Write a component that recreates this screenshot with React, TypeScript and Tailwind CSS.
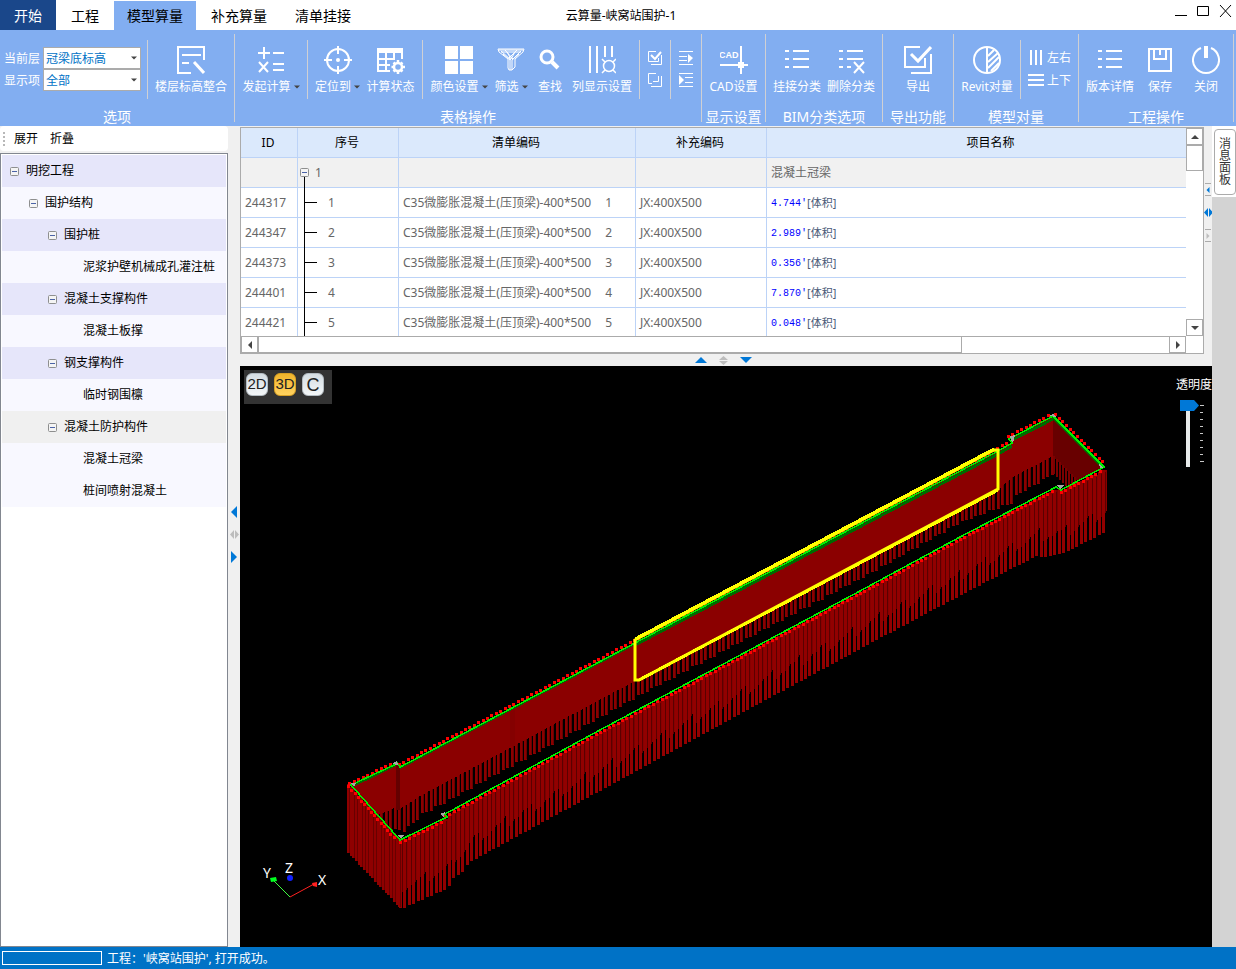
import { useState } from 'react';
import type { ReactNode } from 'react';

type Point = [number, number];

interface TreeNode {
  label: string;
  level: number;
  tone: string;
  leaf?: boolean;
}

const TABS = ['工程', '模型算量', '补充算量', '清单挂接'];

const TREE: TreeNode[] = [
  { label: '明挖工程', level: 0, tone: 'bg-[#e6e6fa]' },
  { label: '围护结构', level: 1, tone: 'bg-[#f8f8ff]' },
  { label: '围护桩', level: 2, tone: 'bg-[#e6e6fa]' },
  { label: '泥浆护壁机械成孔灌注桩', level: 3, tone: 'bg-[#f8f8ff]', leaf: true },
  { label: '混凝土支撑构件', level: 2, tone: 'bg-[#e6e6fa]' },
  { label: '混凝土板撑', level: 3, tone: 'bg-[#f8f8ff]', leaf: true },
  { label: '钢支撑构件', level: 2, tone: 'bg-[#e6e6fa]' },
  { label: '临时钢围檩', level: 3, tone: 'bg-[#f8f8ff]', leaf: true },
  { label: '混凝土防护构件', level: 2, tone: 'bg-[#f0f0f0]' },
  { label: '混凝土冠梁', level: 3, tone: 'bg-[#f8f8ff]', leaf: true },
  { label: '桩间喷射混凝土', level: 3, tone: 'bg-[#f8f8ff]', leaf: true },
];

const INDENT = ['pl-2', 'pl-[27px]', 'pl-[46px]', 'pl-[81px]'];

const ROWS = [
  { id: '244317', no: 1, volume: "4.744'" },
  { id: '244347', no: 2, volume: "2.989'" },
  { id: '244373', no: 3, volume: "0.356'" },
  { id: '244401', no: 4, volume: "7.870'" },
  { id: '244421', no: 5, volume: "0.048'" },
];

/* ---------- icons ---------- */

function Icon({ children, size = 28 }: { children: ReactNode; size?: number }) {
  return (
    <svg
      width={size}
      height={size}
      viewBox={`0 0 ${size} ${size}`}
      fill="none"
      stroke="#fff"
      strokeWidth="2"
      aria-hidden="true"
    >
      {children}
    </svg>
  );
}

const FloorIcon = () => (
  <Icon>
    <path d="M27 14V1H1v26h13M5 9h19M5 17h7" />
    <path d="M17 16l10 11" strokeWidth="3" />
  </Icon>
);

const CalcIcon = () => (
  <Icon>
    <path d="M1 7h12M7 1v12M16 7h11M16 18h11M16 24h11M2 16l9 10M11 16L2 26" />
  </Icon>
);

const TargetIcon = () => (
  <Icon>
    <circle cx="14" cy="14" r="11" />
    <path d="M14 0v8M14 20v8M0 14h8M20 14h8" />
    <circle cx="14" cy="14" r="2" fill="#fff" stroke="none" />
  </Icon>
);

const TableGearIcon = () => (
  <Icon>
    <path d="M0 2h26v5H0z" fill="#fff" stroke="none" />
    <path d="M1 7v18h12M25 7v6M1 13h17M1 19h12M9 7v18M17 7v7" />
    <circle cx="21" cy="21" r="4" strokeWidth="2.500" />
    <path
      d="M21 14v3M21 25v3M14.500 21h2M25.500 21h2.500M16.500 16.500l2 2M23.500 23.500l2 2M25.500 16.500l-2 2M18.500 23.500l-2 2"
      strokeWidth="2.500"
    />
  </Icon>
);

const ColorIcon = () => (
  <Icon>
    <path d="M0 0h13v13H0zM15 0h13v13H15zM0 15h13v13H0zM15 15h13v13H15z" fill="#fff" stroke="none" />
  </Icon>
);

const FilterIcon = () => (
  <Icon>
    <path d="M1 3h26l-1 3-8 7v8l-3 3h-3l-1-2v-9L2 6z" strokeWidth="1" />
    <path d="M2 4h24M4 6h20M4 5l10 9M8 4l8 9M24 5l-9 9M20 4l-8 8M6 8l7 6v10M22 8l-7 6v10M10 6l4 7 4-7" strokeWidth="1" />
  </Icon>
);

const SearchIcon = () => (
  <Icon>
    <circle cx="11" cy="11" r="6" strokeWidth="3" />
    <path d="M16 16l6 6" strokeWidth="4" />
  </Icon>
);

const ColumnsIcon = () => (
  <Icon>
    <path d="M2 0v27M9 0v27M17 0v11M24 0v11" />
    <circle cx="21" cy="20" r="5.500" strokeWidth="1.500" />
    <path d="M14 13l3 3M28 13l-3 3M14 27l3-3M28 27l-3-3" strokeWidth="1.500" />
  </Icon>
);

const CadIcon = () => (
  <Icon>
    <text x="-1" y="12" fontSize="9" fontWeight="700" fontFamily="Liberation Sans, sans-serif" fill="#fff" stroke="none">
      CAD
    </text>
    <path d="M0 19h28M21 0v28" />
    <path d="M18 16h6v6h-6z" fill="#fff" stroke="none" />
  </Icon>
);

const ListIcon = () => (
  <Icon>
    <path d="M2 5h4M10 5h16M2 13h4M10 13h16M2 21h4M10 21h16" />
  </Icon>
);

const ListRemoveIcon = () => (
  <Icon>
    <path d="M2 5h4M10 5h16M2 13h4M10 13h16M2 21h4M10 21h4M17 16l10 11M27 16L17 27" />
  </Icon>
);

const ExportIcon = () => (
  <Icon>
    <path d="M16 1H1v20h20v-9M27 8v19H7" />
    <path d="M7 8l7 7L27 1" strokeWidth="3" />
  </Icon>
);

const RevitIcon = () => (
  <Icon>
    <circle cx="14" cy="14" r="13" />
    <path d="M14 1v26M15 10l6-6M15 16l10-9M15 22l11-11M18 25l8-8" />
  </Icon>
);

const SaveIcon = () => (
  <Icon>
    <path d="M3 3h22v22H3zM8 3v10h12V3M14 4v5" />
  </Icon>
);

const PowerIcon = () => (
  <Icon>
    <path d="M9 2a13 13 0 1 0 10 0" />
    <path d="M14 0v12" strokeWidth="4" />
  </Icon>
);

const CheckAllIcon = () => (
  <Icon size={16}>
    <path d="M9 1.500H1.500v10h10V8M14.500 5v9.500H4" strokeWidth="1" />
    <path d="M4 5l4 4 6-7" />
  </Icon>
);

const InvertIcon = () => (
  <Icon size={16}>
    <path d="M9 1.500H1.500v10H5M11.500 4v5.500H6M14.500 4v10.500H4" strokeWidth="1" />
  </Icon>
);

const IndentIcon = () => (
  <Icon size={16}>
    <path d="M1 1.500h14M1 6.500h8M1 10.500h8M1 14.500h14" strokeWidth="1" />
    <path d="M10 4l5 4-5 5z" fill="#fff" stroke="none" />
  </Icon>
);

const OutdentIcon = () => (
  <Icon size={16}>
    <path d="M1 1.500h14M7 5.500h8M7 10.500h8M1 14.500h14" strokeWidth="1" />
    <path d="M1 3l5 5-5 5z" fill="#fff" stroke="none" />
  </Icon>
);

function Arrow({ dir, color = '#444', size = 6 }: { dir: 'up' | 'down' | 'left' | 'right'; color?: string; size?: number }) {
  const d = {
    up: 'M0 9L6 3l6 6z',
    down: 'M0 3h12L6 9z',
    left: 'M9 0v12L3 6z',
    right: 'M3 0l6 6-6 6z',
  }[dir];
  return (
    <svg width={size} height={size} viewBox="0 0 12 12" className="shrink-0" aria-hidden="true">
      <path d={d} fill={color} />
    </svg>
  );
}

function SplitGrip({ color, upright }: { color: string; upright?: boolean }) {
  return (
    <svg width="9" height="9" viewBox="0 0 9 9" className="shrink-0" aria-hidden="true">
      <path d={upright ? 'M4.500 0L9 4H0zM0 5h9L4.500 9z' : 'M0 4.500L4 0v9zM5 0v9l4-4.500z'} fill={color} />
    </svg>
  );
}

function ExpandBox() {
  return (
    <svg width="9" height="9" viewBox="0 0 9 9" className="shrink-0" aria-hidden="true">
      <rect x="0.500" y="0.500" width="8" height="8" rx="1" fill="#f4f4f4" stroke="#8e8f8f" />
      <path d="M2 4.500h5" stroke="#4b63a7" />
    </svg>
  );
}

/* ---------- ribbon ---------- */

interface RibbonButtonProps {
  icon: ReactNode;
  label: string;
  width: string;
  menu?: boolean;
}

function RibbonButton({ icon, label, width, menu }: RibbonButtonProps) {
  return (
    <button type="button" className={`flex shrink-0 flex-col items-center gap-[5px] pt-4 ${width}`}>
      {icon}
      <span className="flex items-center gap-[3px] text-xs leading-4 whitespace-nowrap">
        {label}
        {menu && <Arrow dir="down" />}
      </span>
    </button>
  );
}

function RibbonGroup({ title, width, children }: { title: string; width: string; children: ReactNode }) {
  return (
    <>
      <section className={`flex shrink-0 flex-col ${width}`}>
        <div className="flex h-[78px] items-start">{children}</div>
        <h2 className="text-center text-sm leading-[18px] whitespace-nowrap">{title}</h2>
      </section>
      <span className="mt-1 h-[88px] w-px shrink-0 bg-[#cfd0d4]" />
    </>
  );
}

const InnerDivider = () => <span className="mt-2.5 h-[59px] w-px shrink-0 bg-[#cfd0d4]" />;

function RibbonSelect({ id, label, options }: { id: string; label: string; options: string[] }) {
  return (
    <div className="flex h-[22px] items-center gap-[3px]">
      <label htmlFor={id} className="pt-0.5 text-xs">
        {label}
      </label>
      <div className="relative">
        <select
          id={id}
          className="block h-[22px] w-[98px] appearance-none border border-[#ababab] bg-white pt-0.5 pl-0.5 text-xs text-[#0072c6]"
        >
          {options.map((option) => (
            <option key={option}>{option}</option>
          ))}
        </select>
        <span className="pointer-events-none absolute top-2 right-1">
          <Arrow dir="down" />
        </span>
      </div>
    </div>
  );
}

function Ribbon() {
  return (
    <div className="flex h-24 shrink-0 overflow-hidden bg-[#82aef1] text-white">
      <RibbonGroup title="选项" width="w-[234px]">
        <div className="w-[147px] pt-[17px] pl-1">
          <RibbonSelect id="floor" label="当前层" options={['冠梁底标高']} />
          <RibbonSelect id="display" label="显示项" options={['全部']} />
        </div>
        <InnerDivider />
        <RibbonButton icon={<FloorIcon />} label="楼层标高整合" width="w-[86px]" />
      </RibbonGroup>

      <RibbonGroup title="表格操作" width="w-[466px]">
        <RibbonButton icon={<CalcIcon />} label="发起计算" width="w-[72px]" menu />
        <InnerDivider />
        <RibbonButton icon={<TargetIcon />} label="定位到" width="w-[59px]" menu />
        <RibbonButton icon={<TableGearIcon />} label="计算状态" width="w-[55px] pr-2" />
        <InnerDivider />
        <RibbonButton icon={<ColorIcon />} label="颜色设置" width="w-[72px]" menu />
        <RibbonButton icon={<FilterIcon />} label="筛选" width="w-8" menu />
        <RibbonButton icon={<SearchIcon />} label="查找" width="w-[46px]" />
        <RibbonButton icon={<ColumnsIcon />} label="列显示设置" width="w-[66px] pr-2" />
        <InnerDivider />
        <div className="flex w-[30px] flex-col items-center gap-1.5 pt-5">
          <button type="button" aria-label="全选"><CheckAllIcon /></button>
          <button type="button" aria-label="反选"><InvertIcon /></button>
        </div>
        <InnerDivider />
        <div className="flex w-[30px] flex-col items-center gap-1.5 pt-5">
          <button type="button" aria-label="展开行"><IndentIcon /></button>
          <button type="button" aria-label="收起行"><OutdentIcon /></button>
        </div>
      </RibbonGroup>

      <RibbonGroup title="显示设置" width="w-[63px]">
        <RibbonButton icon={<CadIcon />} label="CAD设置" width="w-[63px]" />
      </RibbonGroup>

      <RibbonGroup title="BIM分类选项" width="w-[116px]">
        <RibbonButton icon={<ListIcon />} label="挂接分类" width="ml-1 w-[54px]" />
        <RibbonButton icon={<ListRemoveIcon />} label="删除分类" width="w-[54px]" />
      </RibbonGroup>

      <RibbonGroup title="导出功能" width="w-[70px]">
        <RibbonButton icon={<ExportIcon />} label="导出" width="w-[70px]" />
      </RibbonGroup>

      <RibbonGroup title="模型对量" width="w-[124px]">
        <RibbonButton icon={<RevitIcon />} label="Revit对量" width="w-[66px]" />
        <InnerDivider />
        <div className="flex flex-col gap-[7px] pt-5 pl-[7px] text-xs leading-4">
          <button type="button" className="flex items-center gap-[3px]">
            <Icon size={16}>
              <path d="M3 0v15M8 0v15M13 0v15" />
            </Icon>
            左右
          </button>
          <button type="button" className="flex items-center gap-[3px]">
            <Icon size={16}>
              <path d="M0 2h16M0 7h16M0 12h16" />
            </Icon>
            上下
          </button>
        </div>
      </RibbonGroup>

      <RibbonGroup title="工程操作" width="w-[154px]">
        <RibbonButton icon={<ListIcon />} label="版本详情" width="w-[62px]" />
        <RibbonButton icon={<SaveIcon />} label="保存" width="w-[38px]" />
        <RibbonButton icon={<PowerIcon />} label="关闭" width="w-[54px]" />
      </RibbonGroup>
    </div>
  );
}

function TitleBar() {
  const [active, setActive] = useState('模型算量');

  return (
    <header className="grid h-[30px] shrink-0 grid-cols-[1fr_auto_1fr] bg-white">
      <nav className="flex text-sm">
        <button type="button" className="mr-px w-14 bg-[#1a478a] text-white">
          开始
        </button>
        {TABS.map((tab) => (
          <button
            key={tab}
            type="button"
            onClick={() => setActive(tab)}
            className={`mt-px whitespace-nowrap ${tab === active ? 'mx-px bg-[#82aef1] px-[13px]' : 'px-3.5'}`}
          >
            {tab}
          </button>
        ))}
      </nav>
      <h1 className="pl-1.5 text-xs leading-[31px] whitespace-nowrap">云算量-峡窝站围护-1</h1>
      <div className="flex items-start justify-end gap-[9px] pt-1 pr-1">
        <button type="button" aria-label="最小化">
          <svg width="13" height="14" viewBox="0 0 13 14">
            <path d="M0 11.500h12" stroke="#000" />
          </svg>
        </button>
        <button type="button" aria-label="最大化">
          <svg width="13" height="14" viewBox="0 0 13 14">
            <path d="M0.500 2.500h11v9h-11z" fill="none" stroke="#000" />
          </svg>
        </button>
        <button type="button" aria-label="关闭窗口">
          <svg width="13" height="14" viewBox="0 0 13 14">
            <path d="M1 1l11 12M12 1L1 13" stroke="#000" />
          </svg>
        </button>
      </div>
    </header>
  );
}

/* ---------- left tree ---------- */

function TreePanel() {
  return (
    <aside className="flex w-[228px] shrink-0 flex-col text-xs">
      <div className="mb-0.5 flex h-[25px] shrink-0 items-center gap-3 rounded-sm bg-white">
        <span className="ml-[3px] h-3.5 border-l-2 border-dotted border-[#b8b8b8]" />
        <button type="button" className="-ml-[3px]">展开</button>
        <button type="button">折叠</button>
      </div>
      <ul className="flex-1 border border-[#828790] bg-white p-px">
        {TREE.map((node) => (
          <li key={node.label} className={`flex h-8 items-center gap-[7px] ${node.tone} ${INDENT[node.level]}`}>
            {!node.leaf && (
              <button type="button" aria-label="折叠节点">
                <ExpandBox />
              </button>
            )}
            <span className="whitespace-nowrap">{node.label}</span>
          </li>
        ))}
      </ul>
    </aside>
  );
}

/* ---------- quantity table ---------- */

const CELL = 'h-[30px] border-b border-[#bcd3f7] p-0';

function QuantityTable() {
  return (
    <table className="w-[973px] table-fixed border-separate border-spacing-0 text-xs text-[#666]">
      <colgroup>
        <col className="w-[57px]" />
        <col className="w-[101px]" />
        <col className="w-[237px]" />
        <col className="w-[131px]" />
        <col />
      </colgroup>
      <thead>
        <tr className="bg-[#dbe9fc] text-black">
          {['ID', '序号', '清单编码', '补充编码'].map((name) => (
            <th key={name} className={`${CELL} border-r pr-0.5 font-normal`}>
              {name}
            </th>
          ))}
          <th className={`${CELL} font-normal`}>项目名称</th>
        </tr>
      </thead>
      <tbody>
        <tr className="bg-[#f1f1f1]">
          <td className={`${CELL} border-r`} />
          <td className={`${CELL} border-r`}>
            <div className="flex h-[29px] items-center gap-1.5 pl-0.5">
              <svg width="9" height="29" viewBox="0 0 9 29">
                <rect x="0.500" y="10.500" width="8" height="8" rx="1" fill="#f4f4f4" stroke="#8e8f8f" />
                <path d="M2 14.500h5" stroke="#4b63a7" />
                <path d="M4.500 19v10" stroke="#000" />
              </svg>
              1
            </div>
          </td>
          <td className={`${CELL} border-r`} />
          <td className={`${CELL} border-r`} />
          <td className={`${CELL} pl-1`}>混凝土冠梁</td>
        </tr>
        {ROWS.map((row) => (
          <tr key={row.id} className="bg-white">
            <td className={`${CELL} border-r pl-1`}>{row.id}</td>
            <td className={`${CELL} border-r`}>
              <div className="flex h-[29px] items-center gap-[11px] pl-1.5">
                <svg width="13" height="30" viewBox="0 0 13 30" className="-mt-px shrink-0">
                  <path d="M0.500 0v30M0 15.500h13" stroke="#000" />
                </svg>
                {row.no}
              </div>
            </td>
            <td className={`${CELL} border-r pl-1 whitespace-nowrap`}>
              C35微膨胀混凝土(压顶梁)-400*500<span className="ml-3.5">{row.no}</span>
            </td>
            <td className={`${CELL} border-r pl-1`}>JX:400X500</td>
            <td className={`${CELL} pl-1`}>
              <div className="flex items-center pt-0.5 whitespace-nowrap">
                <span className="font-['Liberation_Mono',monospace] text-[10px] text-[#0000ff]">{row.volume}</span>
                <span className="text-[11px] text-[#4a5a78]">[体积]</span>
              </div>
            </td>
          </tr>
        ))}
      </tbody>
    </table>
  );
}

const SCROLL_BUTTON = 'flex size-[17px] shrink-0 items-center justify-center border border-[#ababab] bg-white';

function TablePane() {
  return (
    <div className="mt-px h-[227px] min-w-0 flex-1 border border-[#ababab] bg-white">
      <div className="flex h-[208px]">
        <div className="min-w-0 flex-1 overflow-hidden">
          <QuantityTable />
        </div>
        <div className="flex w-[17px] shrink-0 flex-col">
          <button type="button" aria-label="向上滚动" className={SCROLL_BUTTON}>
            <Arrow dir="up" size={8} />
          </button>
          <span className="h-[26px] border border-[#ababab]" />
          <span className="flex-1" />
          <button type="button" aria-label="向下滚动" className={SCROLL_BUTTON}>
            <Arrow dir="down" size={8} />
          </button>
        </div>
      </div>
      <div className="mr-[17px] flex h-[17px] border-t border-[#ababab]">
        <button type="button" aria-label="向左滚动" className={`${SCROLL_BUTTON} -mt-px`}>
          <Arrow dir="left" size={8} />
        </button>
        <span className="-mt-px h-[17px] w-[704px] border border-[#ababab]" />
        <span className="flex-1" />
        <button type="button" aria-label="向右滚动" className={`${SCROLL_BUTTON} -mt-px`}>
          <Arrow dir="right" size={8} />
        </button>
      </div>
    </div>
  );
}

/* ---------- 3D view ---------- */

const BACK_LEFT: Point[] = [[351, 785], [396, 764]];
const BACK_EDGE: Point[] = [[400, 767], [510, 709], [635, 643], [998, 451], [1012, 443]];
const BACK_RIGHT: Point[] = [[1009, 439], [1053, 416]];
const RIGHT_EDGE: Point[] = [[1053, 416], [1104, 467]];
const FRONT_EDGE: Point[] = [[445, 814], [600, 730], [860, 591], [960, 537], [1056, 487]];
const FRONT_LEFT: Point[] = [[400, 840], [445, 818]];
const LEFT_EDGE: Point[] = [[351, 785], [400, 840]];
const FRONT_RIGHT: Point[] = [[1061, 490], [1104, 467]];

const FRONT_TOP: Point[] = [
  [347, 784], [400, 840], [445, 818], [446, 815], [600, 731], [860, 592], [960, 538], [1056, 488], [1061, 490], [1109, 467],
];
const FRONT_BOTTOM: Point[] = [
  [347, 853], [400, 909], [447, 888], [452, 878], [462, 871], [467, 863], [620, 779], [860, 648], [1013, 567], [1037, 555], [1041, 558], [1060, 554], [1109, 530],
];
const BACK_TOP: Point[] = [[351, 785], [397, 763], [400, 767], [510, 709], [635, 643], [998, 451], [1012, 443], [1013, 437], [1053, 416]];
const BACK_SOLID: Point[] = [[351, 826], [397, 807], [400, 809], [420, 796], [510, 748], [560, 721], [635, 681], [998, 490], [1013, 477], [1053, 456]];
const BACK_BOTTOM: Point[] = [[351, 846], [397, 829], [402, 832], [420, 815], [573, 732], [635, 697], [860, 578], [960, 522], [1010, 503], [1013, 497], [1053, 473]];

function yAt(line: Point[], x: number) {
  for (let i = 1; i < line.length; i++) {
    const [x0, y0] = line[i - 1];
    const [x1, y1] = line[i];
    if (x <= x1) return Math.round(y0 + ((y1 - y0) * (x - x0)) / (x1 - x0));
  }
  return line[line.length - 1][1];
}

const toPoints = (line: Point[]) => line.map((p) => p.join(',')).join(' ');

function range(from: number, to: number, step: number) {
  const out: number[] = [];
  for (let x = from; x < to; x += step) out.push(Math.round(x));
  return out;
}

function dotsAlong(line: Point[], dx: number, dy: number) {
  const dots: Point[] = [];
  for (let i = 1; i < line.length; i++) {
    const [x0, y0] = line[i - 1];
    const [x1, y1] = line[i];
    const count = Math.max(1, Math.round(Math.hypot(x1 - x0, y1 - y0) / 5));
    for (let k = 0; k < count; k++) {
      dots.push([
        Math.round(x0 + ((x1 - x0) * k) / count + dx),
        Math.round(y0 + ((y1 - y0) * k) / count + dy),
      ]);
    }
  }
  return dots;
}

const DOTS = [
  ...dotsAlong(BACK_LEFT, -2, -2),
  ...dotsAlong(BACK_EDGE, -1, -3),
  ...dotsAlong(BACK_RIGHT, -1, -3),
  ...dotsAlong(RIGHT_EDGE, 2, -2),
  ...dotsAlong(FRONT_EDGE, 0, 2),
  ...dotsAlong(FRONT_LEFT, 0, 2),
  ...dotsAlong(LEFT_EDGE, -3, 1),
  ...dotsAlong(FRONT_RIGHT, 0, 2),
];

const LEFT_PILES = range(347, 399, 2.7);
const FRONT_PILES = range(399, 1105, 4.45);
const BACK_PILES = range(380, 1053, 4.5);
const OUTLINE = 'M351 785L394 765L397 763L400 767L510 709L635 643L998 451L1012 443L1009 439L1053 416L1104 467L1061 490L1056 487L960 537L860 591L600 730L445 814L447 817L400 840Z';

function ModelScene() {
  return (
    <svg viewBox="240 366 972 581" className="h-full w-full" shapeRendering="crispEdges" role="img" aria-label="三维模型">
      <defs>
        <clipPath id="pit">
          <path d={OUTLINE} />
        </clipPath>
      </defs>

      {/* far walls, seen only inside the pit */}
      <g clipPath="url(#pit)">
        {BACK_PILES.map((x, i) => {
          const top = yAt(BACK_SOLID, x) - 6;
          const bottom = yAt(BACK_BOTTOM, x) + (i % 3) - 1;
          return (
            <g key={x}>
              <rect x={x} y={top} width="3" height={bottom - top} fill="#8b0000" />
              <rect x={x + 2} y={top} width="1" height={bottom - top - 1} fill="#6a0000" />
            </g>
          );
        })}
        <polygon points={toPoints([...BACK_TOP, ...[...BACK_SOLID].reverse()])} fill="#8b0000" />
        <path d="M396 764h4v46h-4z" fill="#640000" />
        <path d="M510 709h5v37h-5z" fill="#840000" />
        <path d="M1053 416L1105 467L1078 482L1053 457z" fill="#680000" />
        {range(1053, 1080, 3).map((x) => (
          <rect key={x} x={x} y={456 + (x - 1053)} width="2" height="18" fill="#7c0000" />
        ))}
        <path d="M353 786L396 765M400 768L510 710L635 644" stroke="#006a00" strokeWidth="2" fill="none" />
        <path d="M635 645L998 454L1012 446M1014 439L1053 419" stroke="#006a00" strokeWidth="3" fill="none" />
        <path d="M1053 417L1103 467" stroke="#006a00" strokeWidth="3" fill="none" />
      </g>

      {/* near walls */}
      {FRONT_PILES.map((x, i) => {
        const top = yAt(FRONT_TOP, x);
        const bottom = yAt(FRONT_BOTTOM, x);
        const gap = bottom - 18 - (i % 6) * 2;
        return (
          <g key={x}>
            <rect x={x} y={top} width="5" height={gap - top} fill={i % 5 === 2 ? '#7a0000' : '#880000'} />
            <rect x={x} y={top} width="3" height={bottom - top} fill="#920000" />
            <rect x={x + 3} y={top + 2} width="1" height={gap - top} fill="#5a0000" />
          </g>
        );
      })}
      {LEFT_PILES.map((x) => {
        const top = yAt(FRONT_TOP, x);
        return (
          <g key={x}>
            <rect x={x} y={top} width="3" height={yAt(FRONT_BOTTOM, x) - top} fill="#8f0000" />
            <rect x={x + 2} y={top} width="1" height={yAt(FRONT_BOTTOM, x) - top} fill="#680000" />
          </g>
        );
      })}

      {DOTS.map(([x, y], i) => (
        <rect key={i} x={x - 1} y={y - 1} width="3" height="3" fill="#ff0000" />
      ))}
      <path d={OUTLINE} fill="none" stroke="#00f000" strokeWidth="1.500" />
      <path
        d="M351 783l5 0-2 4zM392 764l5-3 1 4zM440 814l5-2-1 5zM397 835h7l-3 3zM1010 436l5-1-1 5-2 2zM1049 416l4-2 3 3zM1056 485h9l-5 4zM1099 464l4 4-3 0z"
        fill="#a5a5a5"
      />

      <path d="M635 640L994 450h4v39L639 680h-4z" fill="none" stroke="#ffff00" strokeWidth="3" shapeRendering="auto" />
      <path d="M635 639L994 449M998 490L639 680" fill="none" stroke="#ffff00" strokeWidth="3" />

      {/* axis triad */}
      <g shapeRendering="auto" fontFamily="Noto Sans, sans-serif" fontSize="14" fill="#fff">
        <path d="M290 897L272 879" stroke="#40ff40" />
        <path d="M290 897L314 884" stroke="#ff2020" />
        <path d="M270 878l6-1 1 4-6 1z" fill="#00ff20" />
        <circle cx="290" cy="878" r="3" fill="#1020ff" />
        <path d="M312 883l5-1v5l-4-1z" fill="#ff2020" />
        <text x="263" y="878">Y</text>
        <text x="285" y="873">Z</text>
        <text x="318" y="885">X</text>
      </g>
    </svg>
  );
}

const MODES = ['2D', '3D', 'C'];

function ModelView() {
  const [mode, setMode] = useState('3D');
  const [opacity, setOpacity] = useState(8);

  return (
    <div className="relative min-h-0 flex-1 overflow-hidden bg-black">
      <ModelScene />
      <div className="absolute top-1 left-1 flex h-[34px] w-[88px] items-start gap-1.5 bg-[#333] pt-[3px] pl-0.5">
        {MODES.map((name) => (
          <button
            key={name}
            type="button"
            onClick={() => setMode(name)}
            className={`flex h-[23px] w-[22px] items-center justify-center rounded-md border font-['Liberation_Sans',sans-serif] text-[#222] ${
              name.length === 1 ? 'text-lg' : 'text-[15px]'
            } ${
              name === mode
                ? 'border-[#d9a125] bg-linear-to-b from-[#f0b429] to-[#ffd25e]'
                : 'border-[#b4bcc2] bg-linear-to-b from-[#d5dde2] to-[#f3f6f8]'
            }`}
          >
            {name}
          </button>
        ))}
      </div>
      <div className="absolute top-[11px] right-0 w-9 text-xs leading-4 text-white">
        <label htmlFor="opacity" className="block whitespace-nowrap">
          透明度
        </label>
        <div className="relative mt-[7px] ml-1 h-[68px] w-7">
          <svg width="28" height="68" viewBox="0 0 28 68" aria-hidden="true">
            <path d="M6 8h4v59H6z" fill="#e7eaea" />
            <path d="M0 0h14l5 5.500-5 5.500H0z" fill="#0078d7" />
            {range(0, 9, 1).map((i) => (
              <path key={i} d={`M20 ${5.5 + i * 7}h${i % 8 === 0 ? 4 : 3}`} stroke="#c8c8c8" />
            ))}
          </svg>
          <input
            id="opacity"
            type="range"
            min={0}
            max={8}
            value={opacity}
            onChange={(e) => setOpacity(Number(e.target.value))}
            className="absolute inset-0 h-full w-5 opacity-0 [writing-mode:vertical-lr]"
          />
        </div>
      </div>
    </div>
  );
}

/* ---------- page ---------- */

export default function App() {
  return (
    <div className="flex h-screen flex-col overflow-hidden bg-[#f0f0f0] font-['Noto_Sans','Noto_Sans_CJK_SC',sans-serif] text-black">
      <TitleBar />
      <Ribbon />

      <main className="flex min-h-0 flex-1">
        <TreePanel />
        <div className="flex w-3 shrink-0 flex-col items-center justify-center gap-3 pb-1">
          <Arrow dir="left" color="#0078d7" size={12} />
          <SplitGrip color="#bdbdbd" />
          <Arrow dir="right" color="#0078d7" size={12} />
        </div>

        <div className="flex min-w-0 flex-1 flex-col">
          <div className="flex">
            <TablePane />
            <div className="mt-[57px] flex w-2 shrink-0 flex-col items-center gap-3">
              <span className="flex h-[13px] w-1.5 items-center justify-center border-y border-[#ababab]">
                <Arrow dir="left" color="#0078d7" size={6} />
              </span>
              <SplitGrip color="#0078d7" />
              <span className="flex h-[13px] w-1.5 items-center justify-center border-y border-[#ababab]">
                <Arrow dir="right" color="#bdbdbd" size={6} />
              </span>
            </div>
          </div>
          <div className="flex h-3 shrink-0 items-center justify-center gap-3 pr-[5px]">
            <Arrow dir="up" color="#0078d7" size={12} />
            <SplitGrip color="#bdbdbd" upright />
            <Arrow dir="down" color="#0078d7" size={12} />
          </div>
          <ModelView />
        </div>

        <div className="w-6 shrink-0 bg-[#d3d3d3]">
          <div className="h-[71px] bg-white pt-[3px] pl-0.5">
            <button
              type="button"
              className="flex h-[66px] w-[22px] items-center justify-center rounded-sm border border-[#ababab] text-xs text-[#333]"
            >
              <span className="w-3 leading-3 break-all">消息面板</span>
            </button>
          </div>
        </div>
      </main>

      <footer className="flex h-[22px] shrink-0 items-center gap-[5px] bg-[#0072c6] pl-0.5 text-xs text-white">
        <span className="h-3.5 w-[100px] border border-white" />
        <p className="pt-0.5">工程：'峡窝站围护', 打开成功。</p>
      </footer>
    </div>
  );
}
